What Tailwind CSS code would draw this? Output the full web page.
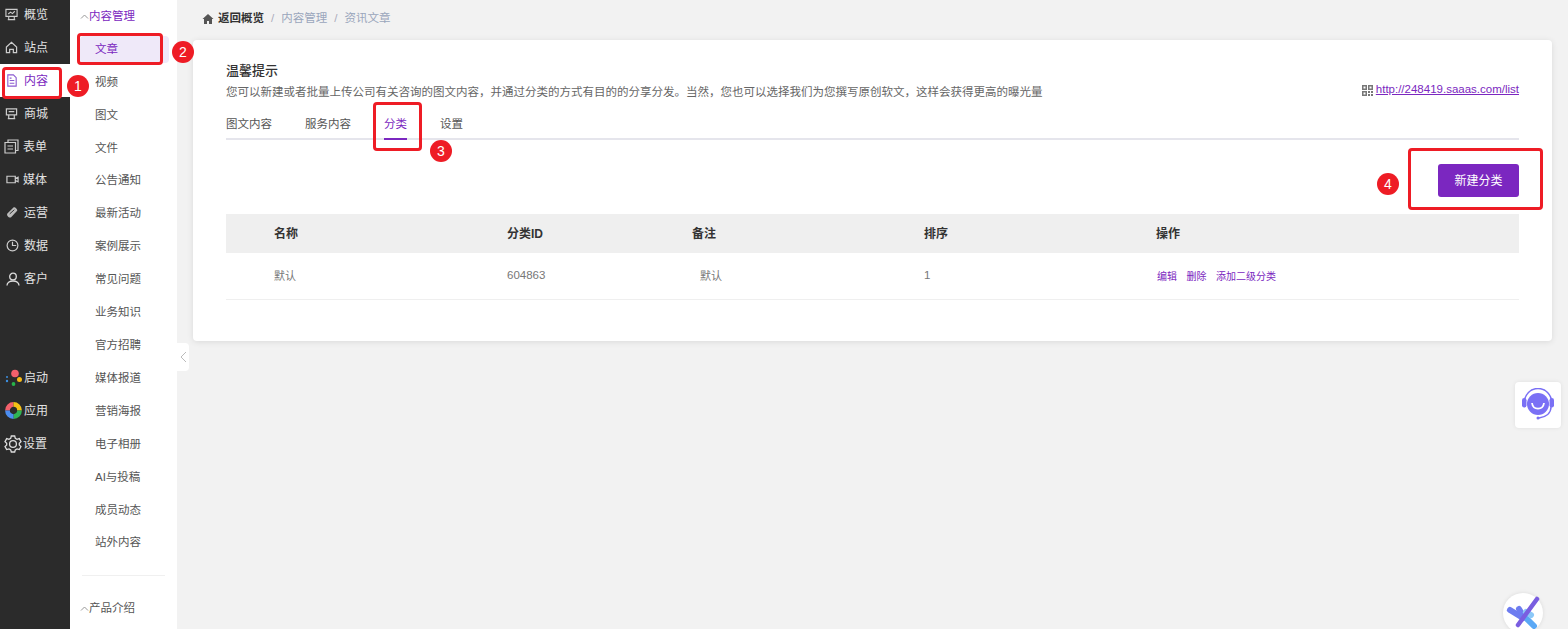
<!DOCTYPE html>
<html lang="zh-CN">
<head>
  <meta charset="UTF-8" />
  <title>资讯文章</title>
  <script src="https://cdn.jsdelivr.net/npm/@tailwindcss/browser@4"></script>
</head>
<body class="bg-[#f2f2f2]">
  <div class="relative flex h-[629px] w-full overflow-hidden bg-[#f2f2f2] text-[11.5px] text-[#555] [font-family:'Liberation_Sans','Noto_Sans_CJK_SC',sans-serif]">

    <!-- 一级菜单 -->
    <nav class="w-[70px] shrink-0 bg-[#2b2b2b] text-xs text-[#e2e2e2]">
      <div class="-mt-[2px]">
        <a class="flex h-[33px] items-center gap-[6px] pl-[5px]">
          <svg class="h-[13px] w-[13px]" viewBox="0 0 14 14" fill="none" stroke="#ccc" stroke-width="1.2"><path d="M1 1.500h12v7.500H1zM3 12.500h8M4 9v3.500M10 9v3.500M3.500 6.500l2.500-2 2 1.500 2.500-2.500"/></svg>
          <span>概览</span>
        </a>
        <a class="flex h-[33px] items-center gap-[6px] pl-[5px]">
          <svg class="h-[13px] w-[13px]" viewBox="0 0 14 14" fill="none" stroke="#ccc" stroke-width="1.300"><path d="M1.500 6.500 7 1.500l5.500 5v6h-3.500v-3.500h-4v3.500H1.500z"/></svg>
          <span>站点</span>
        </a>
        <a class="flex h-[33px] items-center gap-[6px] bg-white pl-[6px] text-[#7b27c0]">
          <svg class="h-[13px] w-[12px]" viewBox="0 0 12 14" fill="none" stroke="#8a5ad0" stroke-width="1.200"><path d="M1.500 1h6l3 3v9h-9zM3.500 7h5M3.500 10h5M3.500 4.500h2"/></svg>
          <span>内容</span>
        </a>
        <a class="flex h-[33px] items-center gap-[6px] pl-[5px]">
          <svg class="h-[13px] w-[13px]" viewBox="0 0 14 14" fill="none" stroke="#ccc" stroke-width="1.300"><path d="M1.500 2h11v6.500h-11zM4 8.500v4M10 8.500v4M3 12.500h8M4 5h6"/></svg>
          <span>商城</span>
        </a>
        <a class="flex h-[33px] items-center gap-[4px] pl-[4px]">
          <svg class="h-[15px] w-[15px]" viewBox="0 0 15 15" fill="none" stroke="#ccc" stroke-width="1.200"><path d="M4 3V1h10v10.500h-2M1 3.500h10.500V14H1zM3.500 7h5.500M3.500 10h5.500"/></svg>
          <span>表单</span>
        </a>
        <a class="flex h-[33px] items-center gap-[4px] pl-[6px]">
          <svg class="h-[13px] w-[13px]" viewBox="0 0 14 14" fill="none" stroke="#ccc" stroke-width="1.300"><path d="M1 3.500h9v7H1zM10 6l3-1.500v5L10 8"/></svg>
          <span>媒体</span>
        </a>
        <a class="flex h-[33px] items-center gap-[5px] pl-[6px]">
          <svg class="h-[13px] w-[13px]" viewBox="0 0 14 14" fill="#bbb"><path d="M1.500 8 8 1.500c1.200-1 4.500 1.500 4 3.500L5.500 12c-2 1.500-5.500-2-4-4z"/><path d="M4 8.500 9 4" stroke="#2b2b2b"/></svg>
          <span>运营</span>
        </a>
        <a class="flex h-[33px] items-center gap-[5px] pl-[6px]">
          <svg class="h-[13px] w-[13px]" viewBox="0 0 14 14" fill="none" stroke="#ccc" stroke-width="1.300"><circle cx="7" cy="7" r="5.800"/><path d="M7 3v4h4"/></svg>
          <span>数据</span>
        </a>
        <a class="flex h-[33px] items-center gap-[4px] pl-[6px]">
          <svg class="h-[14px] w-[14px]" viewBox="0 0 14 14" fill="none" stroke="#ddd" stroke-width="1.300"><circle cx="7" cy="4.500" r="3.300"/><path d="M1 13.500c0-6 12-6 12 0"/></svg>
          <span>客户</span>
        </a>
      </div>
      <div class="mt-[66px]">
        <a class="flex h-[33px] items-center gap-[1px] pl-[5px]">
          <svg class="h-[18px] w-[18px]" viewBox="0 0 18 18"><circle cx="10" cy="4.500" r="3.800" fill="#f2606b"/><circle cx="14.500" cy="10.500" r="2.500" fill="#f5b915"/><circle cx="8.500" cy="15" r="1.900" fill="#27b34a"/><circle cx="2" cy="8" r="1" fill="#3d8fe0"/><circle cx="2" cy="12" r="1.200" fill="#3d8fe0"/></svg>
          <span>启动</span>
        </a>
        <a class="flex h-[33px] items-center gap-[2px] pl-[5px]">
          <svg class="h-[17px] w-[17px]" viewBox="0 0 18 18" fill="none" stroke-width="5"><path d="M2.600 9A6.400 6.400 0 0 1 9 2.600" stroke="#f2606b"/><path d="M9 2.600A6.400 6.400 0 0 1 15.400 9" stroke="#f5c015"/><path d="M15.400 9A6.400 6.400 0 0 1 9 15.400" stroke="#2fb355"/><path d="M9 15.400A6.400 6.400 0 0 1 2.600 9" stroke="#4b8df0"/></svg>
          <span>应用</span>
        </a>
        <a class="flex h-[33px] items-center gap-[1px] pl-[4px]">
          <svg class="h-[18px] w-[18px]" viewBox="0 0 18 18" fill="none" stroke="#ddd" stroke-width="1.300"><circle cx="9" cy="9" r="3.400"/><path d="M7.300 1h3.400l.6 2.300 1.700 1 2.300-.7 1.700 3-1.700 1.600v1.800l1.700 1.600-1.700 3-2.300-.7-1.700 1L10.700 17H7.300l-.6-2.100-1.700-1-2.300.7-1.700-3 1.700-1.600V8.200L1 6.600l1.700-3 2.300.7 1.700-1z"/></svg>
          <span>设置</span>
        </a>
      </div>
    </nav>

    <!-- 二级菜单 -->
    <aside class="w-[107px] shrink-0 bg-white">
      <div class="flex h-[33px] items-center pl-[10px] text-[#7b27c0]">
        <svg class="h-[8px] w-[9px]" viewBox="0 0 9 8" fill="none" stroke="#999" stroke-width="1"><path d="M1 5.500 4.500 2 8 5.500"/></svg>
        <span>内容管理</span>
      </div>
      <ul>
        <li class="flex h-[32.92px] items-center"><a class="ml-[10px] flex h-[27px] w-[89px] items-center rounded-sm bg-[#efe9f9] pl-[15px] text-[#7b27c0]">文章</a></li>
        <li class="flex h-[32.92px] items-center pl-[25px]">视频</li>
        <li class="flex h-[32.92px] items-center pl-[25px]">图文</li>
        <li class="flex h-[32.92px] items-center pl-[25px]">文件</li>
        <li class="flex h-[32.92px] items-center pl-[25px]">公告通知</li>
        <li class="flex h-[32.92px] items-center pl-[25px]">最新活动</li>
        <li class="flex h-[32.92px] items-center pl-[25px]">案例展示</li>
        <li class="flex h-[32.92px] items-center pl-[25px]">常见问题</li>
        <li class="flex h-[32.92px] items-center pl-[25px]">业务知识</li>
        <li class="flex h-[32.92px] items-center pl-[25px]">官方招聘</li>
        <li class="flex h-[32.92px] items-center pl-[25px]">媒体报道</li>
        <li class="flex h-[32.92px] items-center pl-[25px]">营销海报</li>
        <li class="flex h-[32.92px] items-center pl-[25px]">电子相册</li>
        <li class="flex h-[32.92px] items-center pl-[25px]">AI与投稿</li>
        <li class="flex h-[32.92px] items-center pl-[25px]">成员动态</li>
        <li class="flex h-[32.92px] items-center pl-[25px]">站外内容</li>
      </ul>
      <div class="mx-[12px] mt-[15px] border-t border-[#f0f0f0]"></div>
      <div class="mt-[17px] flex h-[33px] items-center pl-[10px]">
        <svg class="h-[8px] w-[9px]" viewBox="0 0 9 8" fill="none" stroke="#999" stroke-width="1"><path d="M1 5.500 4.500 2 8 5.500"/></svg>
        <span>产品介绍</span>
      </div>
    </aside>

    <!-- 主内容 -->
    <main class="min-w-0 flex-1 pl-[16px] pr-[16px]">
      <div class="flex h-[40px] items-center pb-[2px] pl-[9px] text-[#9aa6bc]">
        <svg class="mr-[4px] h-[12px] w-[12px]" viewBox="0 0 12 12" fill="#555"><path d="M6 1 .5 6H2v5h3V8h2v3h3V6h1.500z"/></svg>
        <span class="font-bold text-[#333]">返回概览</span>
        <span class="mx-[7px] text-[#aab]">/</span>
        <span>内容管理</span>
        <span class="mx-[7px] text-[#aab]">/</span>
        <span>资讯文章</span>
      </div>

      <section class="h-[301px] rounded bg-white px-[33px] pt-[22px] shadow-[0_1px_6px_rgba(0,0,0,0.1)]">
        <h2 class="text-[13px] leading-[18px] font-medium text-[#333]">温馨提示</h2>
        <div class="mt-[3px] flex h-[20px] items-center justify-between">
          <p class="text-[#666]">您可以新建或者批量上传公司有关咨询的图文内容，并通过分类的方式有目的的分享分发。当然，您也可以选择我们为您撰写原创软文，这样会获得更高的曝光量</p>
          <a class="-mt-[6px] flex items-center gap-[3px] text-[#7b27c0] underline">
            <svg class="h-[11px] w-[11px]" viewBox="0 0 11 11" fill="#777"><path d="M0 0h5v5H0zM6 0h5v5H6zM0 6h5v5H0zM6 6h2v2H6zM9 6h2v2H9zM6 9h2v2H6zM9 9h2v2H9z"/><path d="M1.500 1.500h2v2h-2zM7.500 1.500h2v2h-2zM1.500 7.500h2v2h-2z" fill="#fff"/></svg>
            http://248419.saaas.com/list
          </a>
        </div>
        <div class="mt-[5px] flex h-[32px] border-b-2 border-[#e5e5ec]">
          <a class="mr-[33px] flex h-[32px] items-center pt-px">图文内容</a>
          <a class="mr-[33px] flex h-[32px] items-center pt-px">服务内容</a>
          <a class="mr-[33px] flex h-[32px] items-center border-b-2 border-[#7b27c0] pt-[3px] text-[#7b27c0]">分类</a>
          <a class="flex h-[32px] items-center pt-px">设置</a>
        </div>
        <div class="mt-[24px] flex justify-end">
          <button class="h-[33px] w-[81px] rounded-[3px] bg-[#7b27c0] text-xs text-white">新建分类</button>
        </div>
        <div class="mt-[17px]">
          <div class="grid h-[39px] grid-cols-[281px_185px_232px_232px_1fr] items-center bg-[#efefef] text-xs font-bold text-[#333]">
            <span class="pl-[48px]">名称</span>
            <span>分类ID</span>
            <span>备注</span>
            <span>排序</span>
            <span>操作</span>
          </div>
          <div class="grid h-[47px] grid-cols-[281px_185px_232px_232px_1fr] items-center border-b border-[#efefef] text-[11px] text-[#777]">
            <span class="pl-[48px]">默认</span>
            <span class="text-[11.5px]">604863</span>
            <span class="pl-[8px]">默认</span>
            <span class="text-[11.5px]">1</span>
            <span class="flex gap-[9.5px] pl-px text-[10px] text-[#7b27c0]">
              <a>编辑</a><a>删除</a><a>添加二级分类</a>
            </span>
          </div>
        </div>
      </section>
    </main>

    <!-- 收起按钮 -->
    <button class="absolute top-[343px] left-[177px] flex h-[28px] w-[12px] items-center justify-center rounded-r bg-white">
      <svg class="h-[12px] w-[7px]" viewBox="0 0 7 12" fill="none" stroke="#bbb" stroke-width="1"><path d="M6 1 1 6l5 5"/></svg>
    </button>

    <!-- 客服 -->
    <div class="absolute top-[382px] left-[1515px] flex h-[46px] w-[46px] items-center justify-center rounded bg-white shadow-[0_0_4px_rgba(0,0,0,0.08)]">
      <svg class="h-[34px] w-[34px]" viewBox="0 0 34 34" fill="none">
        <path d="M3.500 14A13.500 13.500 0 0 1 30.500 14" stroke="#7a70f5" stroke-width="1.500"/>
        <circle cx="17" cy="16" r="11" fill="#7a70f5"/>
        <rect x="1" y="10" width="4.500" height="9.500" rx="2.200" fill="#7a70f5"/>
        <rect x="28.500" y="10" width="4.500" height="9.500" rx="2.200" fill="#7a70f5"/>
        <path d="M11 15c1 7.500 11 7.500 12 0" stroke="#fff" stroke-width="1.800"/>
        <path d="M30 19c0 6-5 10-12 11" stroke="#7a70f5" stroke-width="1.500"/>
        <circle cx="17" cy="30" r="1.500" fill="#7a70f5"/>
      </svg>
    </div>

    <!-- 右下角悬浮图标 -->
    <div class="absolute top-[593px] left-[1503px] h-[40px] w-[40px] rounded-full bg-white shadow-[0_0_4px_rgba(0,0,0,0.1)]">
      <svg class="h-[40px] w-[40px]" viewBox="0 0 40 40" fill="none" stroke-linecap="round" stroke-width="6">
        <path d="M7 17 20 25" stroke="#6d7cf0"/>
        <path d="M16 16 19 21" stroke="#6d7cf0"/>
        <path d="M23 25 31 33" stroke="#5aa8f5"/>
        <path d="M23 19 28 22" stroke="#8cc8f8"/>
        <path d="M34 6 15 32" stroke="#7a5ee0" stroke-width="4.500"/>
      </svg>
    </div>

    <!-- 标注 -->
    <div class="absolute top-[67px] left-[2px] h-[32px] w-[60px] rounded-sm border-[3px] border-[#ee1c25]"></div>
    <div class="absolute top-[33px] left-[77px] h-[32px] w-[86px] rounded-sm border-[3px] border-[#ee1c25]"></div>
    <div class="absolute top-[102px] left-[373px] h-[49px] w-[49px] rounded-sm border-[3px] border-[#ee1c25]"></div>
    <div class="absolute top-[148px] left-[1408px] h-[62px] w-[135px] rounded-sm border-[3px] border-[#ee1c25]"></div>
    <div class="absolute top-[75px] left-[67px] flex h-[22px] w-[22px] items-center justify-center rounded-full bg-[#ee1c25] text-sm text-white">1</div>
    <div class="absolute top-[41px] left-[172px] flex h-[22px] w-[22px] items-center justify-center rounded-full bg-[#ee1c25] text-sm text-white">2</div>
    <div class="absolute top-[140px] left-[430px] flex h-[22px] w-[22px] items-center justify-center rounded-full bg-[#ee1c25] text-sm text-white">3</div>
    <div class="absolute top-[173px] left-[1377px] flex h-[22px] w-[22px] items-center justify-center rounded-full bg-[#ee1c25] text-sm text-white">4</div>
  </div>
</body>
</html>
